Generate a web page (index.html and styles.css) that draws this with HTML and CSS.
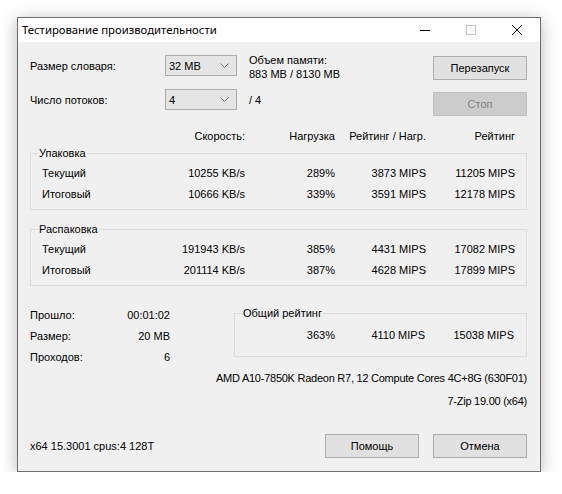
FILE: index.html
```html
<!DOCTYPE html>
<html lang="ru">
<head>
  <meta charset="UTF-8" />
  <title>Тестирование производительности</title>
  <link rel="stylesheet" href="styles.css">
</head>
<body>

  <div class="window">
    <div class="titlebar">
      <div class="title">Тестирование производительности</div>
      <div class="caption-btn">
        <svg width="10" height="10" viewBox="0 0 10 10"><path d="M0 5.5h10" stroke="#000" stroke-width="1"/></svg>
      </div>
      <div class="caption-btn">
        <svg width="10" height="10" viewBox="0 0 10 10"><rect x="0.5" y="0.5" width="9" height="9" fill="none" stroke="#c4c4c4"/></svg>
      </div>
      <div class="caption-btn">
        <svg width="10" height="10" viewBox="0 0 10 10"><path d="M0 0L10 10M10 0L0 10" stroke="#000" stroke-width="1"/></svg>
      </div>
    </div>

    <div class="content">
      <div class="top">
        <div class="settings">
          <div class="label">Размер словаря:</div>
          <div class="combo">
            <span>32 MB</span>
            <svg width="9" height="5" viewBox="0 0 9 5"><path d="M0.5 0.5L4.5 4.5L8.5 0.5" fill="none" stroke="#707070"/></svg>
          </div>
          <div class="memory">Объем памяти:<br>883 MB / 8130 MB</div>

          <div class="label">Число потоков:</div>
          <div class="combo">
            <span>4</span>
            <svg width="9" height="5" viewBox="0 0 9 5"><path d="M0.5 0.5L4.5 4.5L8.5 0.5" fill="none" stroke="#707070"/></svg>
          </div>
          <div class="label">/ 4</div>
        </div>

        <div class="actions">
          <button class="btn">Перезапуск</button>
          <button class="btn" disabled>Стоп</button>
        </div>
      </div>

      <div class="cols head">
        <div></div>
        <div class="num">Скорость:</div>
        <div class="num">Нагрузка</div>
        <div class="num">Рейтинг / Нагр.</div>
        <div class="num">Рейтинг</div>
      </div>

      <fieldset class="group">
        <legend>Упаковка</legend>
        <div class="cols">
          <div class="name">Текущий</div>
          <div class="num">10255 KB/s</div>
          <div class="num">289%</div>
          <div class="num">3873 MIPS</div>
          <div class="num">11205 MIPS</div>

          <div class="name">Итоговый</div>
          <div class="num">10666 KB/s</div>
          <div class="num">339%</div>
          <div class="num">3591 MIPS</div>
          <div class="num">12178 MIPS</div>
        </div>
      </fieldset>

      <fieldset class="group unpack">
        <legend>Распаковка</legend>
        <div class="cols">
          <div class="name">Текущий</div>
          <div class="num">191943 KB/s</div>
          <div class="num">385%</div>
          <div class="num">4431 MIPS</div>
          <div class="num">17082 MIPS</div>

          <div class="name">Итоговый</div>
          <div class="num">201114 KB/s</div>
          <div class="num">387%</div>
          <div class="num">4628 MIPS</div>
          <div class="num">17899 MIPS</div>
        </div>
      </fieldset>

      <div class="summary">
        <div class="stats">
          <div class="label">Прошло:</div><div class="num">00:01:02</div>
          <div class="label">Размер:</div><div class="num">20 MB</div>
          <div class="label">Проходов:</div><div class="num">6</div>
        </div>

        <fieldset class="group total">
          <legend>Общий рейтинг</legend>
          <div class="total-cols">
            <div class="num">363%</div>
            <div class="num">4110 MIPS</div>
            <div class="num">15038 MIPS</div>
          </div>
        </fieldset>
      </div>

      <div class="info cpu">AMD A10-7850K Radeon R7, 12 Compute Cores 4C+8G (630F01)</div>
      <div class="info version">7-Zip 19.00 (x64)</div>

      <div class="footer">
        <div class="label">x64 15.3001 cpus:4 128T</div>
        <div class="footer-btns">
          <button class="btn">Помощь</button>
          <button class="btn">Отмена</button>
        </div>
      </div>
    </div>
  </div>

</body>
</html>
```

FILE: styles.css
```css
* {
  box-sizing: border-box;
}

html, body {
  margin: 0;
  background: #ffffff;
}

body {
  font-family: 'Liberation Sans', Arial, sans-serif;
  font-size: 11px;
  color: #000;
}

/* Dialog frame */
.window {
  margin: 17px 0 0 17px;
  width: 524px;
  height: 455px;
  border: 1px solid #6e6e6e;
  background: #f0f0f0;
  box-shadow: 0 3px 16px rgba(0, 0, 0, 0.28);
}

.titlebar {
  height: 24px;
  background: #ffffff;
  display: flex;
  align-items: center;
}

.title {
  flex: 1;
  padding-left: 4px;
  font-family: 'Noto Sans', 'Open Sans', sans-serif;
  font-size: 11.3px;
  line-height: 16px;
}

.caption-btn {
  width: 46px;
  height: 24px;
  display: flex;
  align-items: center;
  justify-content: center;
}

.content {
  padding: 13px 13px 0 12px;
}

/* Top: dictionary / threads / buttons */
.top {
  display: flex;
  justify-content: space-between;
}

.settings {
  display: grid;
  grid-template-columns: 123px 72px auto;
  grid-template-rows: 21px 21px;
  row-gap: 13px;
  column-gap: 12px;
  align-items: center;
}

.label {
  line-height: 14px;
  white-space: nowrap;
}

.memory {
  line-height: 14px;
  align-self: start;
  margin-top: -2px;
}

.combo {
  height: 21px;
  border: 1px solid #adadad;
  background: #e5e5e5;
  display: flex;
  align-items: center;
  justify-content: space-between;
  padding: 0 7px 0 3px;
}

.actions {
  display: flex;
  flex-direction: column;
  gap: 12px;
  margin-top: 1px;
}

.btn {
  width: 94px;
  height: 24px;
  border: 1px solid #adadad;
  background: #e1e1e1;
  font-family: inherit;
  font-size: 11px;
  color: #000;
  padding: 0;
}

.btn:disabled {
  background: #cccccc;
  border-color: #bfbfbf;
  color: #838383;
}

/* Results table */
.cols {
  display: grid;
  grid-template-columns: 107px 107px 90px 91px 89px;
  grid-auto-rows: 21px;
  align-items: center;
  line-height: 14px;
}

.head {
  margin-top: 10px;
  padding-left: 1px;
  grid-auto-rows: 20px;
}

.num {
  text-align: right;
  white-space: nowrap;
}

.name {
  padding-left: 11px;
}

.group {
  margin: 0;
  padding: 2px 0 5px 0;
  min-width: 0;
  border: 1px solid #dcdcdc;
}

.group legend {
  margin-left: 7px;
  padding: 0 1px;
  line-height: 14px;
}

.unpack {
  margin-top: 12px;
}

/* Summary */
.summary {
  display: flex;
  justify-content: space-between;
  margin-top: 18px;
}

.stats {
  display: grid;
  grid-template-columns: 90px 50px;
  grid-auto-rows: 21px;
  align-items: center;
  line-height: 14px;
}

.total {
  width: 293px;
  margin-top: 2px;
  padding: 4px 0 11px 0;
  align-self: flex-start;
}

.total-cols {
  display: grid;
  grid-template-columns: 100px 90px 89px;
  grid-auto-rows: 21px;
  align-items: center;
  line-height: 14px;
}

.info {
  text-align: right;
  line-height: 14px;
  letter-spacing: -0.25px;
}

.cpu {
  margin-top: 4px;
}

.version {
  margin-top: 9px;
}

.footer {
  display: flex;
  justify-content: space-between;
  align-items: center;
  margin-top: 26px;
}

.footer-btns {
  display: flex;
  gap: 14px;
}
```
